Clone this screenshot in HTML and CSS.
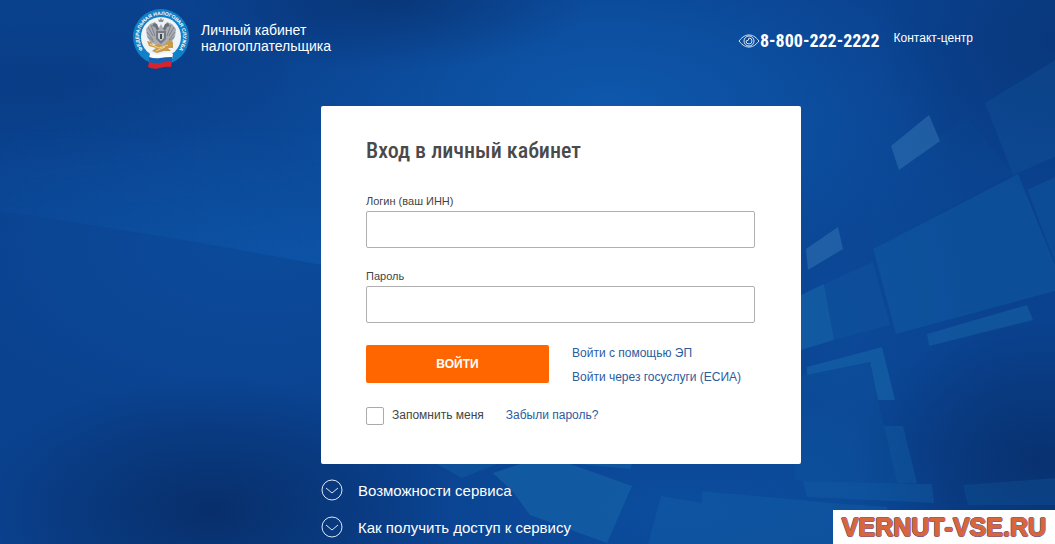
FILE: index.html
```html
<!DOCTYPE html>
<html lang="ru">
<head>
    <meta charset="UTF-8">
    <meta name="viewport" content="width=device-width, initial-scale=1.0">
    <title>Личный кабинет налогоплательщика</title>
    <link rel="stylesheet" href="styles.css">
</head>
<body>
    <svg class="backdrop" viewBox="0 0 1055 544" preserveAspectRatio="none" aria-hidden="true">
        <defs>
            <radialGradient id="glow">
                <stop offset="0" stop-color="#0e58ac"/>
                <stop offset="0.5" stop-color="#0e58ac" stop-opacity="0.55"/>
                <stop offset="1" stop-color="#0e58ac" stop-opacity="0"/>
            </radialGradient>
            <radialGradient id="shade">
                <stop offset="0" stop-color="#07285f"/>
                <stop offset="0.5" stop-color="#07285f" stop-opacity="0.5"/>
                <stop offset="1" stop-color="#07285f" stop-opacity="0"/>
            </radialGradient>
            <linearGradient id="beam" x1="0" y1="0" x2="0" y2="1">
                <stop offset="0.3" stop-color="#0f5cb2" stop-opacity="0"/>
                <stop offset="1" stop-color="#0f5cb2" stop-opacity="0.6"/>
            </linearGradient>
            <linearGradient id="beamFade" x1="0" y1="0" x2="1" y2="0">
                <stop offset="0" stop-color="#fff" stop-opacity="0.4"/>
                <stop offset="0.8" stop-color="#fff"/>
            </linearGradient>
            <mask id="beamMask"><rect width="420" height="300" fill="url(#beamFade)"/></mask>
        </defs>
        <rect width="1055" height="544" fill="#0a428f"/>
        <ellipse cx="610" cy="110" rx="350" ry="180" fill="url(#glow)"/>
        <ellipse cx="260" cy="240" rx="320" ry="190" fill="url(#glow)" opacity="0.4"/>
        <ellipse cx="840" cy="320" rx="160" ry="260" fill="url(#glow)" opacity="0.3"/>
        <ellipse cx="680" cy="510" rx="300" ry="120" fill="url(#glow)" opacity="0.5"/>
        <ellipse cx="210" cy="510" rx="240" ry="130" fill="url(#shade)" opacity="0.75"/>
        <ellipse cx="1040" cy="460" rx="190" ry="140" fill="url(#shade)" opacity="0.65"/>
        <ellipse cx="1055" cy="40" rx="180" ry="160" fill="url(#shade)" opacity="0.4"/>
        <ellipse cx="390" cy="0" rx="200" ry="70" fill="url(#shade)" opacity="0.5"/>
        <ellipse cx="40" cy="80" rx="260" ry="90" fill="url(#shade)" opacity="0.2"/>
        <path d="M0 90L420 60V284Q200 240 0 211z" fill="url(#beam)" mask="url(#beamMask)"/>

        <!-- translucent panels -->
        <g fill="#1565a8">
            <path d="M873 183L967 117L1013 174L873 249z" opacity="0.06"/>
            <path d="M985 103L1055 60V157L1013 175z" opacity="0.22"/>
            <path d="M1022 176L1027 190L1055 177V262z" opacity="0.3"/>
            <path d="M873 249L1018 174L1055 265V291L896 334z" opacity="0.35"/>
            <path d="M824 284L873 262L890 325L834 340z" opacity="0.22"/>
            <path d="M801 295L824 284L834 340L801 350z" opacity="0.6"/>
            <path d="M927 334L1027 305L1033 320L929 346z" opacity="0.5"/>
            <path d="M807 367L882 347L895 400H878L870 362L807 375z" opacity="0.6"/>
            <path d="M795 377L870 362L878 400L884 426L897 483L795 481z" opacity="0.15"/>
            <path d="M884 426H903L917 483H897z" opacity="0.35"/>
            <path d="M803 481L932 484L934 503L807 497z" opacity="0.35"/>
            <path d="M963 485L1055 478V505H968z" opacity="0.25"/>
            <path d="M437 464H497L462 478z" opacity="0.4"/>
            <path d="M577 464H632L630 469z" opacity="0.5"/>
            <path d="M493 473L520 464H570L632 486L607 543L530 515L513 492z" opacity="0.6"/>
            <path d="M661 496L702 503V491L833 503L887 507V544H648z" opacity="0.35"/>
        </g>
        <path d="M891 146L929 115L940 141L899 170zM806 249L838 227L843 249L808 270z" fill="#3a7cb8" opacity="0.45"/>
    </svg>

    <div class="page">
        <header class="header">
            <a href="#" class="brand">
                <svg class="emblem" viewBox="0 0 56 60" aria-hidden="true">
                    <defs>
                        <path id="ring" d="M14 45A22 22 0 1 1 42 45"/>
                    </defs>
                    <circle cx="28" cy="28" r="28" fill="#1180c6"/>
                    <circle cx="28" cy="28" r="20" fill="#eef3f8"/>
                    <text class="emblem-text"><textPath href="#ring" startOffset="50%">ФЕДЕРАЛЬНАЯ НАЛОГОВАЯ СЛУЖБА</textPath></text>
                    <!-- eagle -->
                    <path d="M26 13H30L31 10L29 11L28 8L27 11L25 10z" fill="#8b8f96"/>
                    <path d="M26 19L22 13L17 15L13 20L14 28L18 34L24 36L28 40L32 36L38 34L42 28L43 20L39 15L34 13L30 19L28 15z" fill="#a9adb3"/>
                    <path d="M15 18L20 27M18 16L22 27M14 23L20 31M15 28L21 33M41 18L36 27M38 16L34 27M42 23L36 31M41 28L35 33" stroke="#7d828a" fill="none"/>
                    <path d="M21 14L24 15L26 20L24 22L22 18L19 17zM35 14L32 15L30 20L32 22L34 18L37 17z" fill="#6d7279"/>
                    <path d="M23 22H33V30L28 35L23 30z" fill="#767b83"/>
                    <path d="M25 24H31V29L28 32L25 29z" fill="#c9cdd2"/>
                    <path d="M27 25H29V30H27z" fill="#42474e"/>
                    <!-- gold key and caduceus -->
                    <path d="M14 32L18 33L20 36L26 35L30 37L36 31L40 33V39L35 39L38 42L31 42L24 44L19 42L23 39L16 37z" fill="#c99a4a"/>
                    <path d="M17 35L26 39L35 36M23 42L32 38" stroke="#f0d79a" fill="none"/>
                    <!-- flag -->
                    <path d="M17 44Q22 47 28 45T40 45L39 50Q33 48 27 51T16 50z" fill="#fff"/>
                    <path d="M16 48Q22 50 27 49T39 48V54Q33 52 27 55T16 54z" fill="#1a5fae"/>
                    <path d="M16 53Q22 55 27 54T39 52L38 58Q33 57 27 59T15 58z" fill="#d8232f"/>
                </svg>
                <span>Личный кабинет<br>налогоплательщика</span>
            </a>
            <div class="contacts">
                <svg class="eye" viewBox="0 0 22 16" aria-hidden="true">
                    <path d="M1 8C5 3 8 2 11 2S17 3 21 8C17 13 14 14 11 14S5 13 1 8z"/>
                    <circle cx="11" cy="8" r="5"/>
                    <path d="M11 5A3 3 0 1 1 8 8Q11 8 11 5"/>
                </svg>
                <a href="tel:88002222222" class="phone">8-800-222-2222</a>
                <a href="#" class="contact-link">Контакт-центр</a>
            </div>
        </header>

        <main class="main">
            <form class="card">
                <h1>Вход в личный кабинет</h1>
                <label for="login">Логин (ваш ИНН)</label>
                <input type="text" id="login" class="field">
                <label for="password">Пароль</label>
                <input type="password" id="password" class="field">
                <div class="actions">
                    <button type="submit" class="submit-btn">ВОЙТИ</button>
                    <div class="alt-login">
                        <a href="#">Войти с помощью ЭП</a>
                        <a href="#">Войти через госуслуги (ЕСИА)</a>
                    </div>
                </div>
                <div class="options">
                    <input type="checkbox" id="remember" class="checkbox">
                    <label for="remember" class="remember">Запомнить меня</label>
                    <a href="#">Забыли пароль?</a>
                </div>
            </form>

            <div class="info">
                <button type="button" class="info-btn">
                    <svg viewBox="0 0 22 22" aria-hidden="true"><circle cx="11" cy="11" r="10"/><path d="M5 9L11 14L17 9"/></svg>
                    Возможности сервиса
                </button>
                <button type="button" class="info-btn">
                    <svg viewBox="0 0 22 22" aria-hidden="true"><circle cx="11" cy="11" r="10"/><path d="M5 9L11 14L17 9"/></svg>
                    Как получить доступ к сервису
                </button>
            </div>
        </main>
    </div>

    <div class="site-mark">VERNUT-VSE.RU</div>
</body>
</html>
```
FILE: styles.css
```css
* {
    margin: 0;
    padding: 0;
    box-sizing: border-box;
}

body {
    position: relative;
    min-height: 100vh;
    background: #0a428f;
    font-family: "Liberation Sans", Arial, sans-serif;
    font-size: 12px;
    color: #444;
}

a {
    color: #2b5c9e;
    text-decoration: none;
}

a:hover {
    text-decoration: underline;
}

.backdrop {
    position: absolute;
    top: 0;
    left: 0;
    width: 100%;
    height: 100%;
}

.page {
    position: relative;
    padding: 9px 82px 4px 133px;
}

.header {
    display: flex;
    justify-content: space-between;
    align-items: flex-start;
    min-height: 97px;
}

.brand {
    display: flex;
    gap: 12px;
    color: #fff;
    font-size: 14px;
    line-height: 16px;
}

.brand span {
    padding-top: 13px;
}

.emblem {
    width: 56px;
    height: 60px;
}

.emblem-text {
    fill: #fff;
    font-size: 5px;
    font-weight: bold;
    text-anchor: middle;
}

.contacts {
    display: flex;
    align-items: center;
    padding-top: 20px;
}

.eye {
    width: 22px;
    height: 16px;
    fill: none;
    stroke: #d5e4f5;
}

.phone {
    margin-right: 14px;
    color: #fff;
    font-family: "Roboto Condensed", Roboto, sans-serif;
    font-size: 18px;
    font-weight: bold;
    line-height: 24px;
}

.contact-link {
    color: #fff;
    font-size: 12px;
    padding-bottom: 6px;
}

.main {
    display: flex;
    flex-direction: column;
    align-items: center;
    padding-left: 16px;
}

.card {
    display: flex;
    flex-direction: column;
    width: 100%;
    max-width: 480px;
    padding: 29px 46px 39px 45px;
    border-radius: 2px;
    background: #fff;
}

h1 {
    margin-bottom: 28px;
    font-family: "Roboto Condensed", Roboto, sans-serif;
    font-size: 22px;
    font-weight: 500;
    line-height: 32px;
    color: #4a4a4a;
}

label {
    font-size: 11px;
    line-height: 12px;
    margin-bottom: 4px;
}

.field {
    height: 37px;
    margin-bottom: 22px;
    padding: 0 10px;
    border: 1px solid #b0b0b0;
    border-radius: 2px;
    font-size: 14px;
}

.actions {
    display: flex;
    gap: 23px;
}

.submit-btn {
    width: 183px;
    height: 38px;
    border: none;
    border-radius: 2px;
    background: #ff6600;
    color: #fff;
    font-family: inherit;
    font-size: 12px;
    font-weight: bold;
    cursor: pointer;
}

.alt-login {
    display: flex;
    flex-direction: column;
    gap: 8px;
    line-height: 16px;
}

.options {
    display: flex;
    align-items: flex-start;
    margin-top: 22px;
    line-height: 16px;
}

.checkbox {
    appearance: none;
    width: 18px;
    height: 18px;
    border: 1px solid #aaa;
    border-radius: 2px;
}

.checkbox:checked {
    background: #ff6600;
}

.remember {
    margin: 0 22px 0 8px;
    font-size: 12px;
    line-height: 16px;
}

.info {
    display: flex;
    flex-direction: column;
    align-items: flex-start;
    gap: 15px;
    width: 100%;
    max-width: 480px;
    padding-top: 15px;
}

.info-btn {
    display: flex;
    align-items: center;
    gap: 15px;
    border: none;
    background: none;
    color: #fff;
    font-family: inherit;
    font-size: 15px;
    cursor: pointer;
}

.info-btn svg {
    width: 22px;
    height: 22px;
    fill: none;
    stroke: #dce8f7;
}

.site-mark {
    position: absolute;
    right: 0;
    bottom: 0;
    padding: 0 9px;
    background: #fff;
    color: #d9663a;
    font-size: 25px;
    font-weight: bold;
    font-kerning: none;
    line-height: 34px;
    -webkit-text-stroke: 1px #d9663a;
    text-shadow: 1px 0 #4a58a8, -1px 0 #4a58a8, 0 1px #4a58a8, 0 -1px #4a58a8;
}
```
